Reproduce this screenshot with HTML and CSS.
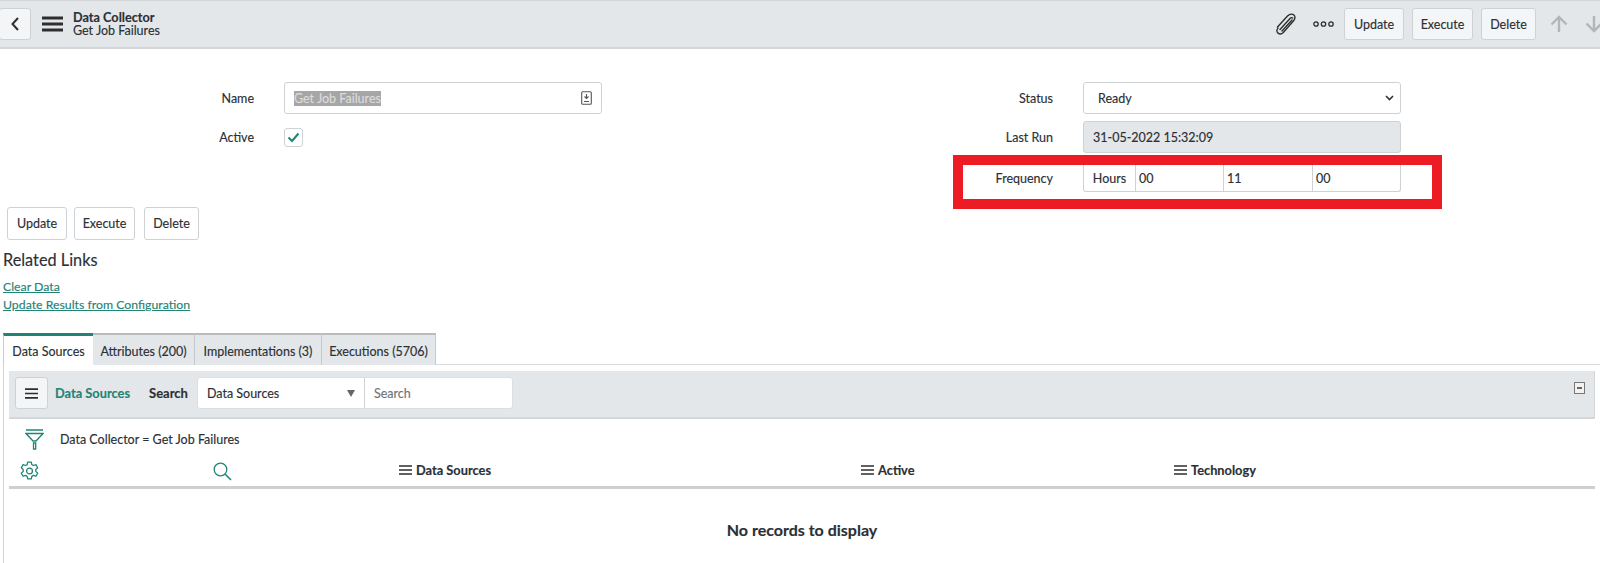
FILE: index.html
```html
<!DOCTYPE html>
<html lang="en">
<head>
<meta charset="utf-8">
<title>Data Collector - Get Job Failures</title>
<link rel="stylesheet" href="styles.css">
</head>
<body>
<header class="topbar">
  <button class="btn back-btn" aria-label="Back"><svg width="10" height="16" viewBox="0 0 10 16"><path d="M8 2 2.500 8 8 14" fill="none" stroke="#2e2e2e" stroke-width="2"/></svg></button>
  <svg class="menu-icon" width="21" height="16" viewBox="0 0 21 16"><path d="M0 2h21M0 8h21M0 14h21" stroke="#2e2e2e" stroke-width="3"/></svg>
  <div class="titles">
    <div class="title-main">Data Collector</div>
    <div class="title-sub">Get Job Failures</div>
  </div>
  <div class="top-actions">
    <svg class="clip-icon" width="22" height="22" viewBox="0 0 22 22"><g fill="none" stroke="#2e2e2e" stroke-width="1.400" stroke-linecap="round"><path d="M2.500 14 12.500 3c2-2 4.800-2.400 6.400-1s1.300 4-.5 6L8.300 19.500c-1.500 1.500-3.800 1.700-5.300.6s-1.500-3.300 0-5"/><path d="M5 16.500 15 5.500c.8-.9 2-1 2.700-.4"/><path d="M7 18 17 7"/></g></svg>
    <svg class="more-icon" width="21" height="6" viewBox="0 0 21 6"><g fill="none" stroke="#2e2e2e" stroke-width="1.300"><circle cx="3" cy="3" r="2.200"/><circle cx="10.500" cy="3" r="2.200"/><circle cx="18" cy="3" r="2.200"/></g></svg>
    <button class="btn top-btn w-update">Update</button>
    <button class="btn top-btn w-execute">Execute</button>
    <button class="btn top-btn w-delete">Delete</button>
    <svg class="arrow-up" width="18" height="18" viewBox="0 0 18 18"><path d="M9 17V2M1.500 9.500 9 2l7.500 7.500" fill="none" stroke="#b3b6b9" stroke-width="2.400"/></svg>
    <svg class="arrow-down" width="18" height="18" viewBox="0 0 18 18"><path d="M9 1v15M1.500 8.500 9 16l7.500-7.500" fill="none" stroke="#b3b6b9" stroke-width="2.400"/></svg>
  </div>
</header>

<form class="form-grid">
  <div class="form-col">
    <div class="row row-name">
      <label class="label">Name</label>
      <div class="control">
        <span class="selected-text">Get Job Failures</span>
        <svg class="ref-icon" width="11" height="14" viewBox="0 0 11 14"><rect x=".7" y=".7" width="9.600" height="12.600" rx="1" fill="none" stroke="#555" stroke-width="1.100"/><path d="M5.500 3v4.500M3.500 5.500l2 2 2-2M3 10.500h5" fill="none" stroke="#555" stroke-width="1.100"/></svg>
      </div>
    </div>
    <div class="row row-active">
      <label class="label">Active</label>
      <span class="checkbox"><svg width="13" height="11" viewBox="0 0 13 11"><path d="M1.500 5.500 5 9l6.500-7.500" fill="none" stroke="#1f8476" stroke-width="2"/></svg></span>
    </div>
  </div>
  <div class="form-col col-right">
    <div class="row row-name">
      <label class="label">Status</label>
      <div class="control control-select">
        <span>Ready</span>
        <svg width="9" height="6" viewBox="0 0 9 6"><path d="M1 1l3.500 3.500L8 1" fill="none" stroke="#333" stroke-width="1.600"/></svg>
      </div>
    </div>
    <div class="row row-run">
      <label class="label">Last Run</label>
      <div class="control control-readonly">31-05-2022 15:32:09</div>
    </div>
    <div class="row row-frequency">
      <label class="label">Frequency</label>
      <div class="duration">
        <span class="unit">Hours</span>
        <span class="part">00</span>
        <span class="part">11</span>
        <span class="part">00</span>
      </div>
      <div class="annotation"></div>
    </div>
  </div>
</form>

<div class="form-buttons">
  <button class="btn plain-btn w-update">Update</button>
  <button class="btn plain-btn w-execute">Execute</button>
  <button class="btn plain-btn w-delete">Delete</button>
</div>

<section class="related">
  <h2 class="related-title">Related Links</h2>
  <a class="link" href="#">Clear Data</a>
  <a class="link" href="#">Update Results from Configuration</a>
</section>

<nav class="tabs">
  <span class="tab tab-active t1">Data Sources</span>
  <span class="tab t2">Attributes (200)</span>
  <span class="tab t3">Implementations (3)</span>
  <span class="tab t4">Executions (5706)</span>
</nav>

<section class="panel">
  <div class="list-head">
    <button class="btn list-menu" aria-label="Menu"><svg width="13" height="11" viewBox="0 0 13 11"><path d="M0 1.200h13M0 5.500h13M0 9.800h13" stroke="#2e2e2e" stroke-width="1.700"/></svg></button>
    <span class="list-name">Data Sources</span>
    <span class="search-label">Search</span>
    <div class="search-group">
      <div class="search-select"><span>Data Sources</span><i class="caret"></i></div>
      <div class="search-input">Search</div>
    </div>
    <span class="collapse"><i></i></span>
  </div>
  <div class="filter-row">
    <svg width="19" height="21" viewBox="0 0 19 21"><path d="M1 1h17M1 4.500h17L11 12H8zM8.500 14h2.200v6H8.500z" fill="none" stroke="#1f8476" stroke-width="1.300"/></svg>
    <span>Data Collector = Get Job Failures</span>
  </div>
  <div class="col-head">
    <div class="cell c-gear"><svg class="head-icon" width="19" height="20" viewBox="0 0 18 19"><path d="M7.300 1h3.400l.5 2.400 1.600.9 2.300-.8 1.700 3-1.800 1.600v1.800l1.800 1.600-1.700 3-2.300-.8-1.600.9-.5 2.400H7.300l-.5-2.400-1.600-.9-2.300.8-1.700-3 1.800-1.600V8.100L1.200 6.500l1.700-3 2.300.8 1.600-.9z" fill="none" stroke="#1f8476" stroke-width="1.200" stroke-linejoin="round"/><circle cx="9" cy="9.500" r="2.800" fill="none" stroke="#1f8476" stroke-width="1.200"/></svg></div>
    <div class="cell c-search"><svg class="head-icon" width="19" height="19" viewBox="0 0 19 19"><circle cx="7.500" cy="7.500" r="6.300" fill="none" stroke="#1f8476" stroke-width="1.300"/><path d="M12 12l6 6" stroke="#1f8476" stroke-width="1.600"/></svg></div>
    <div class="cell c-sources"><svg class="col-menu" width="13" height="10" viewBox="0 0 13 10"><path d="M0 1h13M0 5h13M0 9h13" stroke="#2e2e2e" stroke-width="1.600"/></svg>Data Sources</div>
    <div class="cell c-active"><svg class="col-menu" width="13" height="10" viewBox="0 0 13 10"><path d="M0 1h13M0 5h13M0 9h13" stroke="#2e2e2e" stroke-width="1.600"/></svg>Active</div>
    <div class="cell c-tech"><svg class="col-menu" width="13" height="10" viewBox="0 0 13 10"><path d="M0 1h13M0 5h13M0 9h13" stroke="#2e2e2e" stroke-width="1.600"/></svg>Technology</div>
  </div>
  <div class="empty">No records to display</div>
</section>
</body>
</html>
```

FILE: styles.css
```css
* { box-sizing: border-box; }
html, body { margin: 0; padding: 0; height: 563px; overflow: hidden; background: #fff; }
body { font-family: "Lato", "Noto Sans", sans-serif; font-size: 12.5px; color: #2b3035; -webkit-text-stroke: .15px; }

.btn {
  font: inherit; color: #2b3035; background: #f4f5f7;
  border: 1px solid #cfd2d5; border-radius: 3px; padding: 0; cursor: pointer;
  display: inline-flex; align-items: center; justify-content: center;
}

.topbar {
  height: 49px; display: flex; align-items: center; background: #e4e7ea;
  border-top: 1px solid #d3d6d9; border-bottom: 2px solid #d3d6d9;
}
.back-btn { width: 32px; height: 32px; margin-left: -1px; }
.menu-icon { margin-left: 11px; }
.titles { margin-left: 10px; line-height: 14px; margin-top: -1px; }
.title-main { font-weight: 700; font-size: 12.7px; }
.top-actions { margin-left: auto; display: flex; align-items: center; }
.clip-icon { margin-right: 16px; }
.more-icon { margin-right: 10px; }
.top-btn { height: 32px; margin-right: 8px; }
.top-btn.w-delete { margin-right: 9px; }
.w-update { width: 60px; }
.w-execute { width: 61px; }
.w-delete { width: 55px; }
.arrow-up { margin: 0 17px 0 5px; }
.arrow-down { margin-right: -3px; }

.form-grid { display: grid; grid-template-columns: 800px 800px; padding-top: 33px; height: 158px; }
.row { display: flex; align-items: center; position: relative; }
.label { width: 254px; text-align: right; margin-right: 30px; }
.col-right .label { width: 253px; }
.control {
  width: 318px; height: 32px; border: 1px solid #cfd2d5; border-radius: 3px; background: #fff;
  display: flex; align-items: center; justify-content: space-between; padding: 0 9px;
}
.selected-text { background: #a6a6a6; color: #dcdcdc; line-height: 15px; }
.row-active { margin-top: 13px; height: 20px; }
.checkbox {
  width: 19px; height: 19px; border: 1px solid #cfd2d5; border-radius: 3px;
  display: flex; align-items: center; justify-content: center;
}
.control-select { padding: 0 6px 0 14px; }
.row-run { margin-top: 7px; }
.control-readonly { background: #e4e7ea; padding: 0 9px; justify-content: flex-start; }
.row-frequency { margin-top: 11px; height: 28px; }
.duration {
  width: 318px; height: 28px; border: 1px solid #cfd2d5; border-top-color: #f0f0f0; border-radius: 0 0 3px 3px;
  display: grid; grid-template-columns: 51px 88px 89px 1fr;
}
.unit { display: flex; align-items: center; justify-content: center; }
.part { display: flex; align-items: center; padding-left: 3px; border-left: 1px solid #cfd2d5; }
.annotation { position: absolute; left: 153px; top: -9px; width: 489px; height: 54px; border: 10px solid #ed1c24; }

.form-buttons { display: flex; gap: 7px; padding-left: 7px; height: 33px; }
.plain-btn { background: #fff; height: 33px; }
.form-buttons .w-delete { margin-left: 2px; }

.related { padding-left: 3px; }
.related-title { font-size: 16.3px; font-weight: 400; margin: 9px 0 7px; line-height: 22px; }
.link { display: block; color: #1f8476; text-decoration: underline; line-height: 18px; font-size: 12.3px; }

.tabs { display: flex; margin: 19px 0 0 3px; height: 32px; border-bottom: 1px solid #dcdcdc; }
.tab {
  display: flex; align-items: center; justify-content: center; height: 32px; background: #e4e7ea;
  border-top: 2px solid #b9bcbf; border-right: 1px solid #c6c9cc; padding-top: 2px;
}
.tab-active { background: #fff; border-top: 3px solid #1f8476; border-left: 1px solid #ccc; border-right: 0; }
.t1 { width: 90px; } .t2 { width: 102px; } .t3 { width: 127px; } .t4 { width: 114px; }

.panel { margin-left: 3px; border-left: 1px solid #d3d3d3; padding: 6px 5px 0 5px; height: 198px; }
.list-head {
  height: 48px; background: #e4e7ea; border-bottom: 2px solid #d3d6d9; border-right: 1px solid #d3d6d9;
  display: flex; align-items: center; padding: 0 0 2px 6px; position: relative;
}
.list-menu { width: 33px; height: 32px; }
.list-name { color: #1f8476; font-weight: 700; margin-left: 7px; font-size: 12.8px; }
.search-label { font-weight: 700; margin-left: 19px; font-size: 13px; }
.search-group { display: flex; margin-left: 9px; height: 32px; background: #fff; border-radius: 3px; border: 1px solid #dcdfe2; }
.search-select { width: 167px; display: flex; align-items: center; justify-content: space-between; padding: 0 9px; border-right: 1px solid #cfd2d5; }
.caret { width: 0; height: 0; border-left: 4px solid transparent; border-right: 4px solid transparent; border-top: 7px solid #666; }
.search-input { width: 147px; display: flex; align-items: center; padding-left: 9px; color: #6f7478; }
.collapse {
  position: absolute; right: 9px; top: 11px; width: 11px; height: 12px; border: 1px solid #777; background: #f2f2f2;
  display: flex; align-items: center; justify-content: center;
}
.collapse i { width: 5px; height: 2px; background: #666; }

.filter-row { display: flex; align-items: center; height: 21px; margin-top: 10px; padding-left: 16px; }
.filter-row span { margin-left: 16px; }
.col-head {
  display: grid; grid-template-columns: 192px 187px 462px 313px 1fr;
  height: 39px; border-bottom: 3px solid #cfcfcf; align-items: center; font-weight: 700; padding: 4px 0 0 11px; font-size: 12.8px;
}
.cell { display: flex; align-items: center; }
.head-icon { margin-top: 2px; }
.c-search { padding-left: 1px; }
.col-menu { margin-right: 4px; }
.empty { text-align: center; font-weight: 700; font-size: 16px; margin-top: 31px; }
```
